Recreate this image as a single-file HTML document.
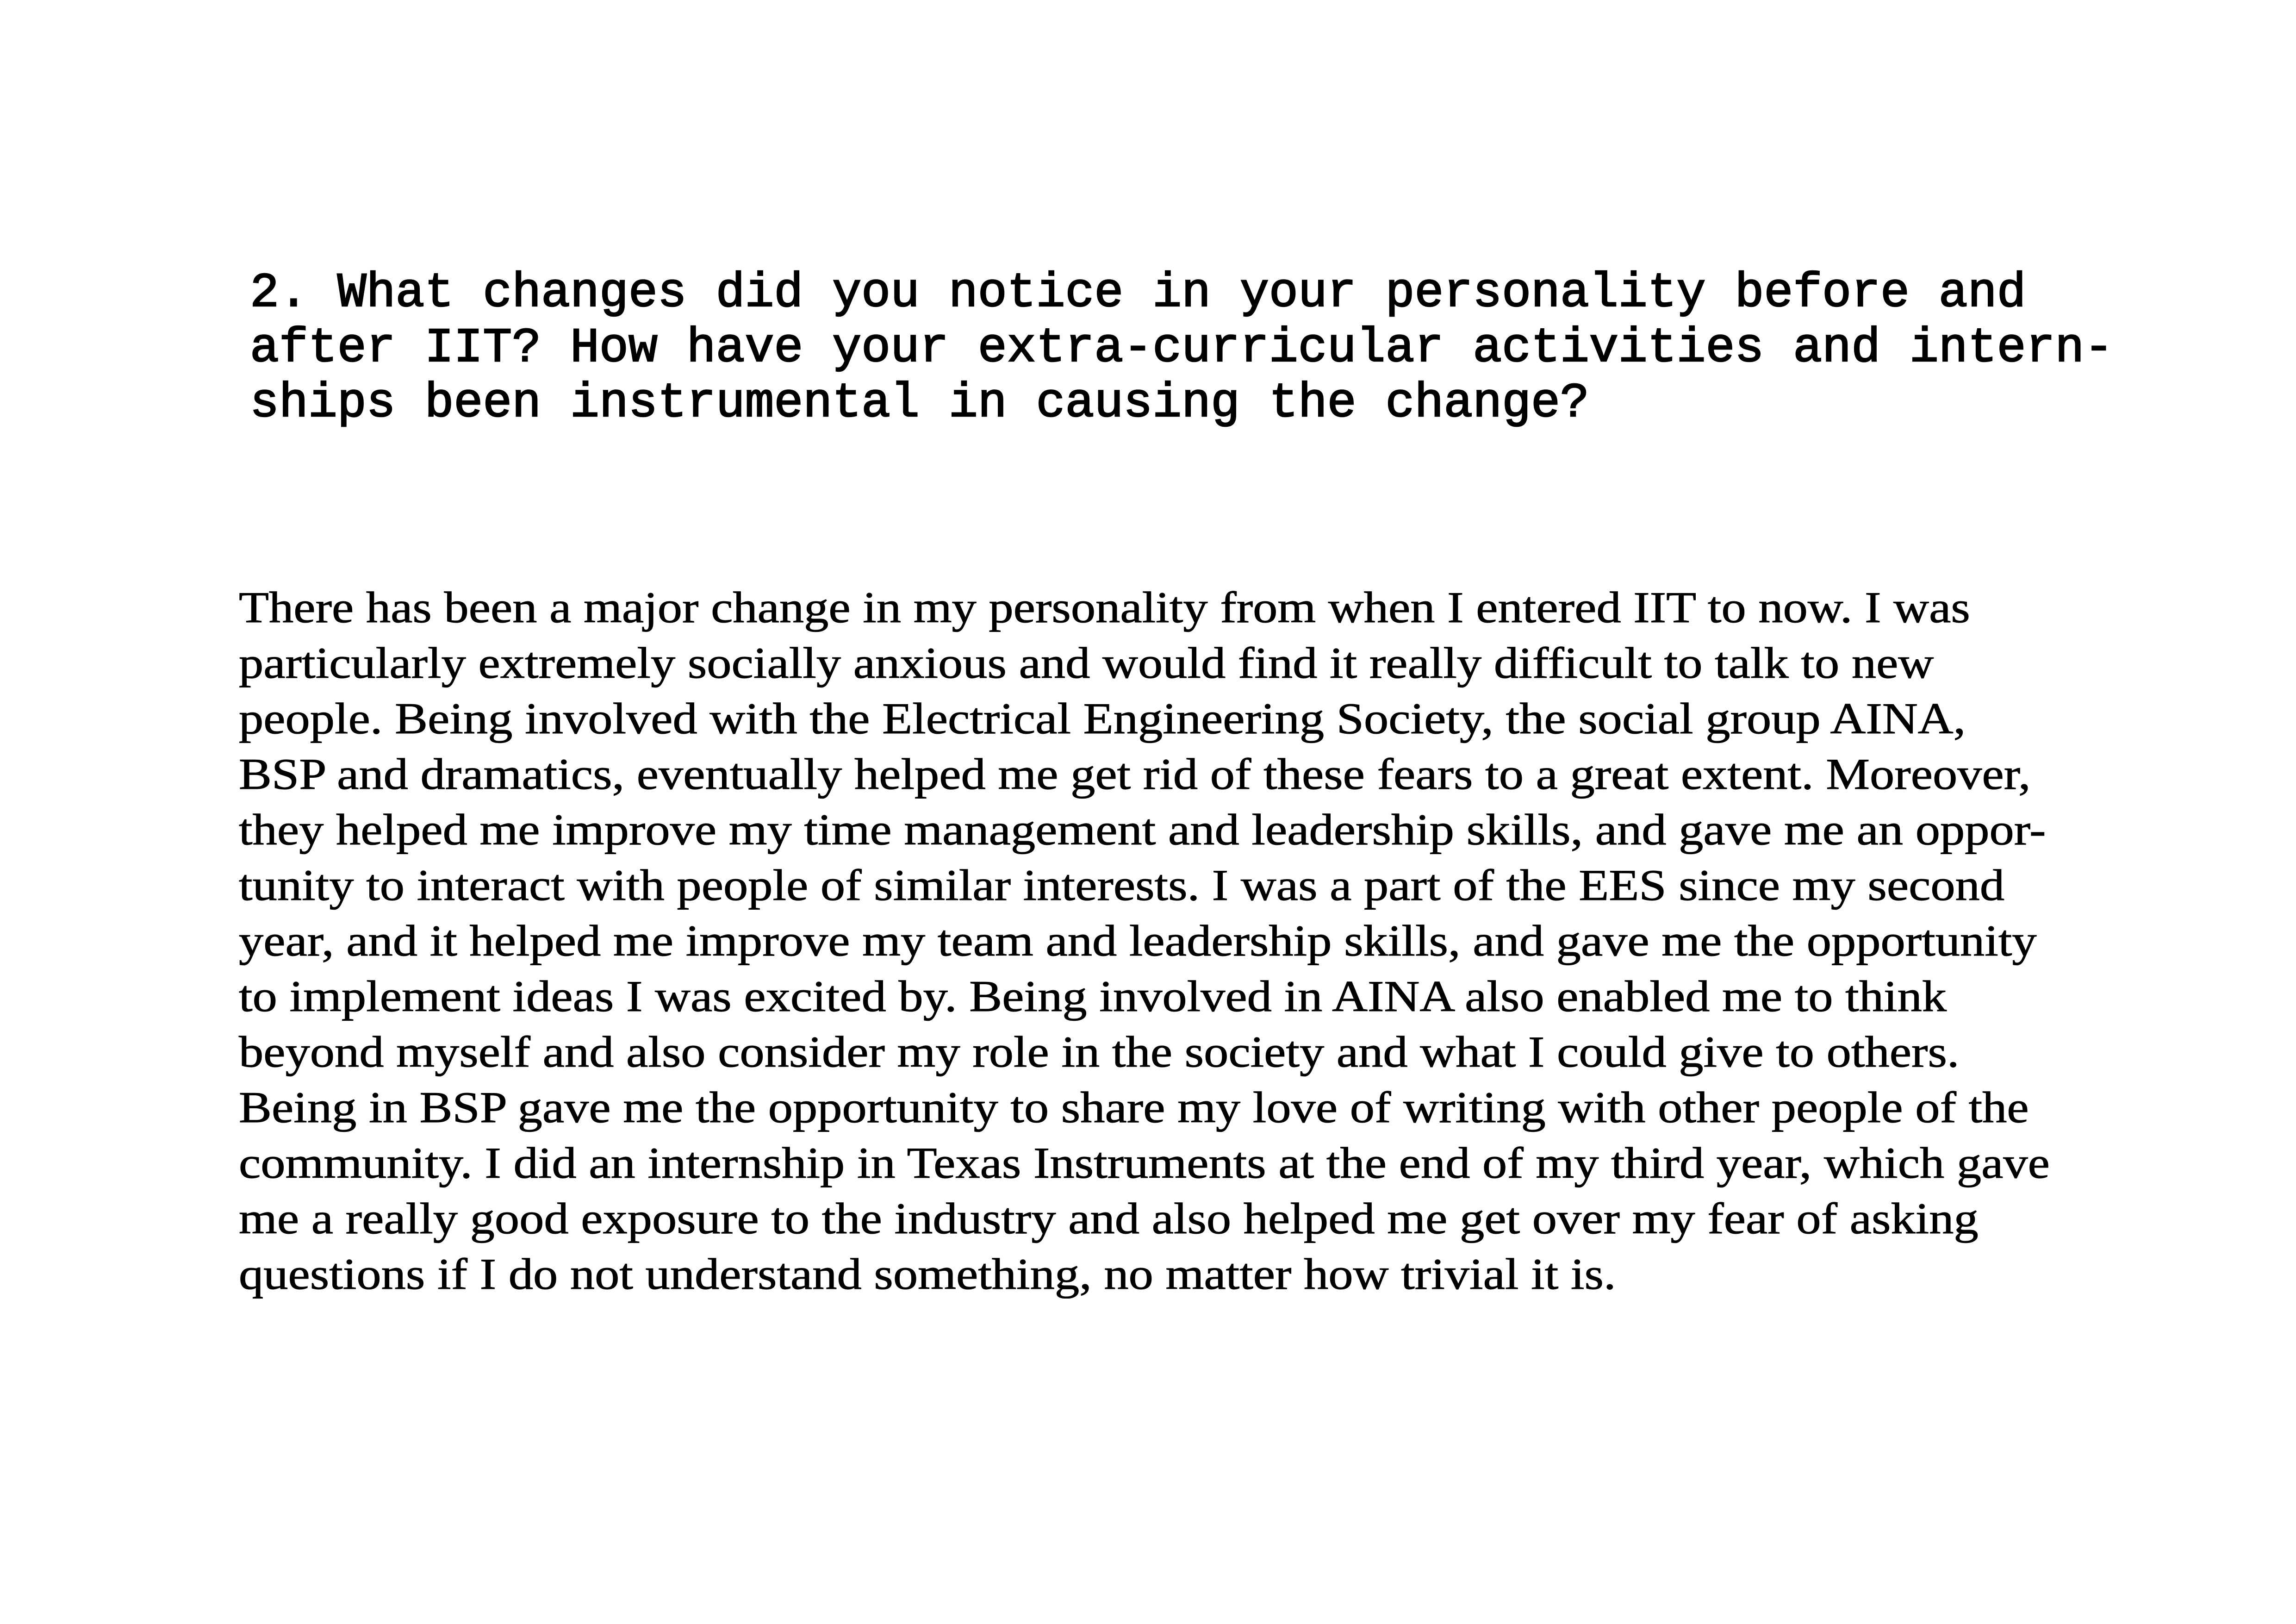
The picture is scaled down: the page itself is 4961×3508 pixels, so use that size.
<!DOCTYPE html>
<html><head><meta charset="utf-8"><style>
html,body{margin:0;padding:0;background:#fff;}
body{width:4961px;height:3508px;position:relative;overflow:hidden;color:#000;}
.h{position:absolute;left:540px;top:574px;font-family:"Liberation Mono",monospace;font-size:105px;line-height:119px;white-space:pre;letter-spacing:-0.1px;-webkit-text-stroke:2.5px #000;}
.b{position:absolute;left:516px;top:1252px;font-family:"Liberation Serif",serif;font-size:95px;line-height:120px;white-space:pre;transform:scaleX(1.121);transform-origin:0 0;-webkit-text-stroke:1px #000;}
</style></head><body>
<div class="h">2. What changes did you notice in your personality before and
after IIT? How have your extra-curricular activities and intern-
ships been instrumental in causing the change?</div>
<div class="b">There has been a major change in my personality from when I entered IIT to now. I was
particularly extremely socially anxious and would find it really difficult to talk to new
people. Being involved with the Electrical Engineering Society, the social group AINA,
BSP and dramatics, eventually helped me get rid of these fears to a great extent. Moreover,
they helped me improve my time management and leadership skills, and gave me an oppor-
tunity to interact with people of similar interests. I was a part of the EES since my second
year, and it helped me improve my team and leadership skills, and gave me the opportunity
to implement ideas I was excited by. Being involved in AINA also enabled me to think
beyond myself and also consider my role in the society and what I could give to others.
Being in BSP gave me the opportunity to share my love of writing with other people of the
community. I did an internship in Texas Instruments at the end of my third year, which gave
me a really good exposure to the industry and also helped me get over my fear of asking
questions if I do not understand something, no matter how trivial it is.</div>
</body></html>
